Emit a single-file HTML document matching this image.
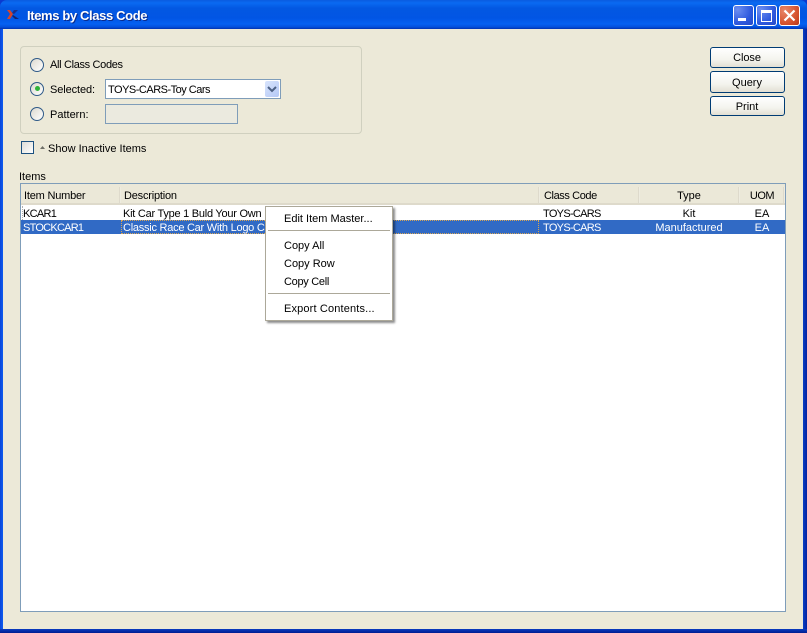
<!DOCTYPE html>
<html>
<head>
<meta charset="utf-8">
<style>
html,body{margin:0;padding:0;background:#0a3ad0}
body{width:807px;height:633px;position:relative;overflow:hidden;font-family:"Liberation Sans",sans-serif;font-size:11px;color:#000}
div,svg{position:absolute;box-sizing:border-box}
.t{white-space:nowrap;line-height:13px;height:13px}
.tw{color:#fff}
.btn{left:710px;width:75px;border:1px solid #003c74;border-radius:3px;background:linear-gradient(#fff,#f4f4ee 60%,#e2dfd3);text-align:center;color:#000}
.hs{top:187px;width:2px;height:16px;background:linear-gradient(90deg,#d6d2c2,#f6f4ea)}
.radio{width:14px;height:14px;border-radius:50%;border:1.5px solid #2f5a88;background:linear-gradient(135deg,#dcd9cf,#fff)}
.sep{left:268px;width:122px;height:1px;background:#aca899}
.wb{top:5px;width:21px;height:21px;border:1px solid #fff;border-radius:3px}
.bl{background:radial-gradient(circle at 20% 20%,#6c8ef0,#2f5ade 60%,#2348c8)}
</style>
</head>
<body>
<!-- title bar -->
<div style="left:0;top:0;width:807px;height:29px;border-radius:7px 7px 0 0;background:linear-gradient(#0a5be0 0,#0a6af2 3px,#0358e2 8px,#0155e4 18px,#0561f2 24px,#0450dc 27px,#0233b0 29px)"></div>
<div style="left:0;top:29px;width:3px;height:604px;background:linear-gradient(90deg,#0a45d8,#0d5cf0)"></div>
<div style="left:803px;top:29px;width:4px;height:604px;background:linear-gradient(90deg,#0a3fc4,#0322a0)"></div>
<div style="left:0;top:629px;width:807px;height:4px;background:linear-gradient(#0a3cc0,#001c90)"></div>
<div style="left:3px;top:29px;width:800px;height:600px;background:#ece9d8"></div>

<svg style="left:7px;top:10px" width="12" height="9" viewBox="0 0 12 9"><path d="M0 0h3l3 4-3 5H0l3-5z" fill="#d8452a"/><path d="M5 3l2-3h4L7 4z" fill="#1c2f8a"/><path d="M6 5l6 4H8L5 6z" fill="#15236e"/></svg>
<div class="t" style="left:27px;top:9px;font-size:13px;font-weight:bold;color:#fff;line-height:14px;height:14px;letter-spacing:-.37px;text-shadow:1px 1px 0 #0a2a8c">Items by Class Code</div>

<!-- window buttons -->
<div class="wb bl" style="left:733px"></div>
<div style="left:738px;top:18px;width:8px;height:3px;background:#fff"></div>
<div class="wb bl" style="left:756px"></div>
<div style="left:761px;top:10px;width:11px;height:12px;border:1px solid #fff;border-top-width:3px"></div>
<div class="wb" style="left:779px;background:radial-gradient(circle at 25% 25%,#e8876a,#d5512c 65%,#b8391a)"></div>
<svg style="left:779px;top:5px" width="21" height="21" viewBox="0 0 21 21"><path d="M5.500 5.500l10 10M15.500 5.500l-10 10" stroke="#fff" stroke-width="2.200" fill="none"/></svg>

<!-- group box -->
<div style="left:20px;top:46px;width:342px;height:88px;border:1px solid #d0d0bf;border-radius:4px"></div>
<div class="radio" style="left:30px;top:57.500px"></div>
<div class="t" style="left:50px;top:59px;letter-spacing:-.33px">All Class Codes</div>
<div class="radio" style="left:30px;top:81.500px"></div>
<div style="left:34.500px;top:86px;width:5px;height:5px;border-radius:50%;background:#2fb33a"></div>
<div class="t" style="left:50px;top:84px;letter-spacing:-.1px">Selected:</div>
<div style="left:105px;top:79px;width:176px;height:20px;border:1px solid #7f9db9;background:#fff"></div>
<div class="t" style="left:108px;top:84px;letter-spacing:-.5px">TOYS-CARS-Toy Cars</div>
<div style="left:265px;top:81px;width:14px;height:16px;border-radius:2px;background:linear-gradient(135deg,#d8e4fc,#b4c8f6)"></div>
<svg style="left:265px;top:81px" width="14" height="16" viewBox="0 0 14 16"><path d="M3 6l4 4 4-4" stroke="#4d6185" stroke-width="2" fill="none"/></svg>
<div class="radio" style="left:30px;top:106.500px"></div>
<div class="t" style="left:50px;top:109px">Pattern:</div>
<div style="left:105px;top:104px;width:133px;height:20px;border:1px solid #7f9db9;background:#ebeadf"></div>

<!-- checkbox -->
<div style="left:21px;top:141px;width:13px;height:13px;border:1px solid #1c5180;background:linear-gradient(135deg,#dcdcd7,#fff)"></div>
<div style="left:40px;top:146px;width:5px;height:3px;background:#6f6f68;clip-path:polygon(50% 0,100% 100%,0 100%)"></div>
<div class="t" style="left:48px;top:143px">Show Inactive Items</div>

<!-- right buttons -->
<div class="btn" style="top:47px;height:21px;line-height:21px;letter-spacing:-.05px;padding-right:1px">Close</div>
<div class="btn" style="top:71px;height:22px;line-height:22px;padding-right:1px">Query</div>
<div class="btn" style="top:96px;height:20px;line-height:20px;padding-right:1px">Print</div>

<!-- table -->
<div class="t" style="left:19px;top:171px">Items</div>
<div style="left:20px;top:183px;width:766px;height:429px;border:1px solid #7f9db9;background:#fff"></div>
<div style="left:21px;top:184px;width:764px;height:21px;background:#ebe8d8;border-bottom:2px solid #dedacb"></div>
<div class="hs" style="left:119px"></div>
<div class="hs" style="left:538px"></div>
<div class="hs" style="left:638px"></div>
<div class="hs" style="left:738px"></div>
<div class="hs" style="left:783px"></div>
<div class="t" style="left:24px;top:190px;letter-spacing:-.2px">Item Number</div>
<div class="t" style="left:124px;top:190px;letter-spacing:-.2px">Description</div>
<div class="t" style="left:544px;top:190px;letter-spacing:-.4px">Class Code</div>
<div class="t" style="left:639px;top:190px;width:100px;text-align:center">Type</div>
<div class="t" style="left:739px;top:190px;width:46px;text-align:center;letter-spacing:-.5px">UOM</div>

<div style="left:21px;top:220px;width:764px;height:14px;background:#316ac5"></div>
<div style="left:121px;top:220px;width:418px;height:14px;border:1px dotted #d8a555"></div>
<div style="left:22px;top:206px;width:1px;height:14px;border-left:1px dotted #b0b0b0"></div>
<div class="t" style="left:23px;top:208px;letter-spacing:-.7px">KCAR1</div>
<div class="t" style="left:123px;top:208px;letter-spacing:-.25px">Kit Car Type 1 Buld Your Own</div>
<div class="t" style="left:543px;top:208px;letter-spacing:-.7px">TOYS-CARS</div>
<div class="t" style="left:639px;top:208px;width:100px;text-align:center">Kit</div>
<div class="t" style="left:739px;top:208px;width:46px;text-align:center">EA</div>
<div class="t tw" style="left:23px;top:222px;letter-spacing:-.75px">STOCKCAR1</div>
<div class="t tw" style="left:123px;top:222px;letter-spacing:-.25px">Classic Race Car With Logo Car</div>
<div class="t tw" style="left:543px;top:222px;letter-spacing:-.7px">TOYS-CARS</div>
<div class="t tw" style="left:639px;top:222px;width:100px;text-align:center">Manufactured</div>
<div class="t tw" style="left:739px;top:222px;width:46px;text-align:center">EA</div>

<!-- context menu -->
<div style="left:265px;top:206px;width:128px;height:115px;background:#fff;border:1px solid #aca899;box-shadow:2px 2px 2px rgba(0,0,0,.45)"></div>
<div class="t" style="left:284px;top:213px">Edit Item Master...</div>
<div class="sep" style="top:230px"></div>
<div class="t" style="left:284px;top:240px">Copy All</div>
<div class="t" style="left:284px;top:258px">Copy Row</div>
<div class="t" style="left:284px;top:276px;letter-spacing:-.3px">Copy Cell</div>
<div class="sep" style="top:293px"></div>
<div class="t" style="left:284px;top:303px;letter-spacing:.15px">Export Contents...</div>
</body>
</html>
